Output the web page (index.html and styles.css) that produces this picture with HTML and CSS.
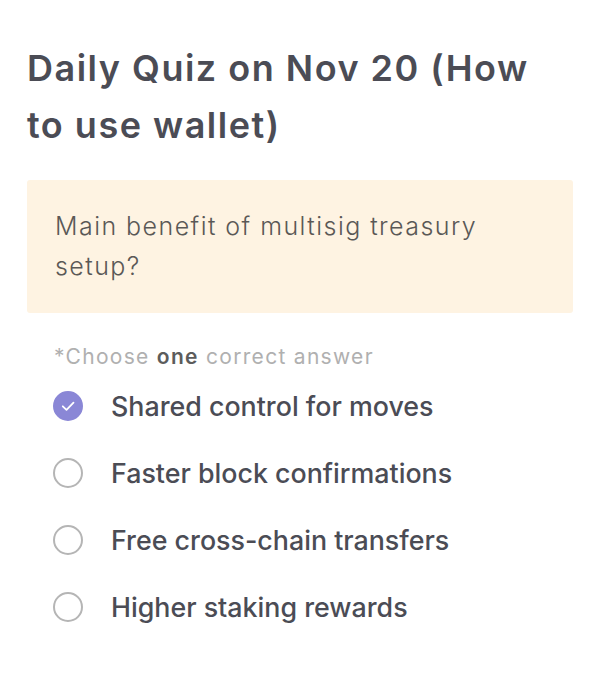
FILE: index.html
```html
<!DOCTYPE html>
<html>
<head>
<meta charset="utf-8">
<link rel="stylesheet" href="styles.css">
</head>
<body>
<div class="page">
  <h1 class="title">Daily Quiz on Nov 20 (How to use wallet)</h1>
  <div class="question">Main benefit of multisig treasury setup?</div>
  <p class="hint">*Choose <b>one</b> correct answer</p>
  <ul class="options">
    <li class="option checked">
      <span class="radio"><svg viewBox="0 0 30 30" width="30" height="30"><path d="M9.8 15.3l3.7 3.6 7-7.3" fill="none" stroke="#fff" stroke-width="1.8" stroke-linecap="round" stroke-linejoin="round"/></svg></span>
      <span class="label">Shared control for moves</span>
    </li>
    <li class="option"><span class="radio"></span><span class="label">Faster block confirmations</span></li>
    <li class="option"><span class="radio"></span><span class="label">Free cross-chain transfers</span></li>
    <li class="option"><span class="radio"></span><span class="label">Higher staking rewards</span></li>
  </ul>
</div>
</body>
</html>
```
FILE: styles.css
```css
* { box-sizing: border-box; }
html, body { margin: 0; padding: 0; background: #fff; }
body { font-family: Inter, "Noto Sans", sans-serif; }
.page { padding: 40px 27px 0 27px; }
.title {
  margin: 0;
  font-size: 36px;
  font-weight: 600;
  line-height: 57px;
  color: #4b4c55;
  letter-spacing: 1.5px;
}
.question {
  margin-top: 26px;
  background: #fef3e2;
  border-radius: 3px;
  padding: 26px 28px 27px 28px;
  font-size: 25px;
  font-weight: 300;
  line-height: 40px;
  color: #5a5856;
  letter-spacing: 1.45px;
}
.hint {
  margin: 30px 0 0 27px;
  font-size: 21px;
  line-height: 28px;
  color: #b0b0b0;
  letter-spacing: 1.3px;
}
.hint b { color: #5c5c5c; font-weight: 600; }
.options { list-style: none; margin: 1px 0 0 0; padding: 0 0 0 26px; }
.option {
  display: flex;
  align-items: center;
  height: 67px;
  gap: 28px;
}
.radio {
  width: 30px; height: 30px;
  border-radius: 50%;
  border: 2px solid #b5b5b5;
  flex: none;
  display: flex;
}
.checked .radio { background: #8a87d6; border-color: #8a87d6; }
.checked .radio svg { margin: -2px; }
.label {
  font-size: 26.8px;
  font-weight: 500;
  color: #4b4c55;
}
```
